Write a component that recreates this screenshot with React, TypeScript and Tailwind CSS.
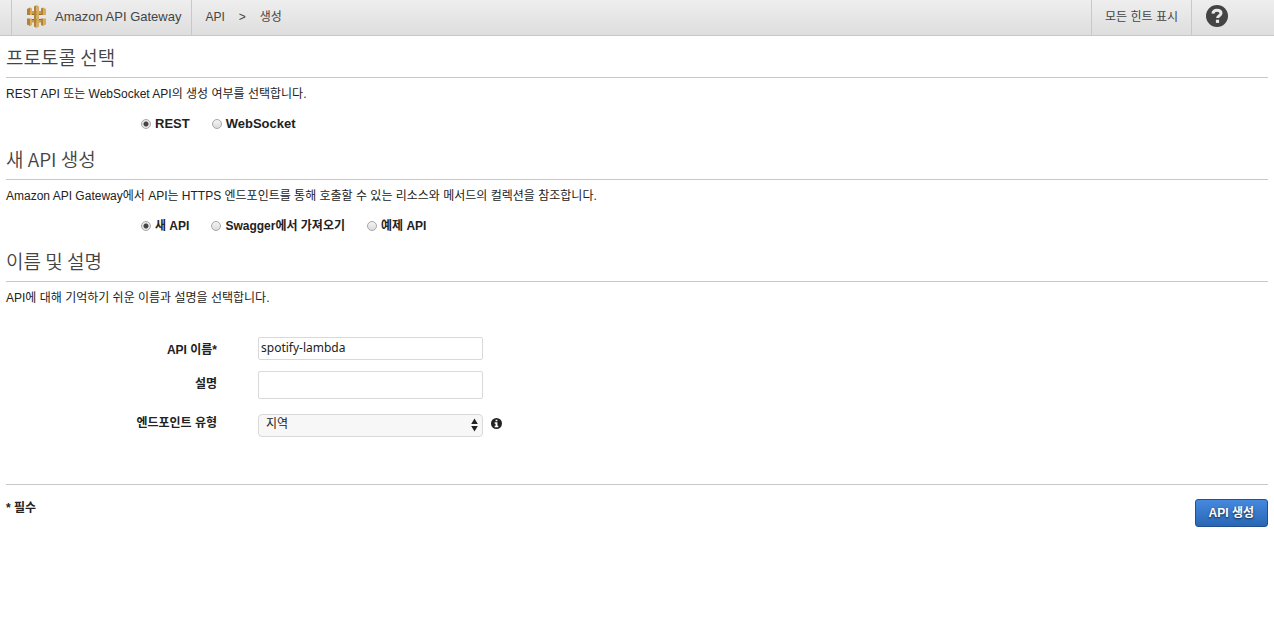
import { useState } from 'react';
import type { ReactNode } from 'react';

function GatewayLogo() {
  return (
    <svg width="21" height="23" viewBox="0 0 21 23" aria-hidden="true">
      <path d="M5 6h11v3.500H5zM5 14h11v3.500H5z" fill="#c99c4a" />
      <path d="M5 9h11v1H5zM5 14h11v1H5z" fill="#8a6526" />
      <path d="M1 4l3-1.500V10H1zM1 13.500h3V21l-3-1.500z" fill="#b08338" />
      <path d="M4 2.500L6 3.500V10H4zM4 13.500h2V20l-2 1z" fill="#d9ab5c" />
      <path d="M15 3.500l2-1V10h-2zM15 13.500h2V21l-2-1z" fill="#b08338" />
      <path d="M17 2.500L20 4v6h-3zM17 13.500h3v6L17 21z" fill="#d9ab5c" />
      <path d="M8 1.500L10.500 0v23L8 21.500z" fill="#b08338" />
      <path d="M10.500 0L13 1.500v20L10.500 23z" fill="#d9ab5c" />
    </svg>
  );
}

function HelpIcon() {
  return (
    <svg width="22" height="22" viewBox="0 0 22 22" aria-hidden="true">
      <circle cx="11" cy="11" r="11" fill="#444" />
      <path
        d="M6.900 8.600C7.200 6.200 8.800 5.300 11 5.300c2.400 0 4 1.100 4 3 0 2.700-3.400 2.300-3.400 4.800"
        fill="none"
        stroke="#e8e8e8"
        strokeWidth="3"
      />
      <path d="M9.900 14.700h3.200v3.200H9.900z" fill="#e8e8e8" />
    </svg>
  );
}

function InfoIcon() {
  return (
    <svg width="11" height="11" viewBox="0 0 12 12" aria-hidden="true">
      <circle cx="6" cy="6" r="6" fill="#222" />
      <path d="M5 2h2v1.500H5zM4 4.700h3v3.800h1V10H4V8.500h1V6.200H4z" fill="#fff" />
    </svg>
  );
}

function Section({ title, text, children }: { title: string; text: string; children: ReactNode }) {
  return (
    <section>
      <h2 className="h-[42px] border-b border-[#c8c8c8] pt-[7px] font-['Noto_Sans_CJK_KR',sans-serif] text-[19px] leading-7 font-[350] text-[#444]">
        {title}
      </h2>
      <p className="pt-1.5 text-xs leading-5">{text}</p>
      {children}
    </section>
  );
}

type RadioOption = { value: string; label: string };

function RadioRow({ name, options, className }: { name: string; options: RadioOption[]; className: string }) {
  const [selected, setSelected] = useState(options[0].value);

  return (
    <div className={`flex h-[34px] gap-[22px] pt-2.5 pl-[135px] ${className}`}>
      {options.map((option) => (
        <label key={option.value} className="flex h-5 items-center gap-1 leading-5 font-bold whitespace-nowrap">
          <input
            type="radio"
            name={name}
            value={option.value}
            checked={selected === option.value}
            onChange={() => setSelected(option.value)}
            className="h-2.5 w-2.5 appearance-none rounded-full border border-[#a6a6a6] bg-linear-to-b from-[#f4f4f4] to-[#dcdcdc] checked:bg-[radial-gradient(circle,#444_0_2px,#e8e8e8_3px)]"
          />
          {option.label}
        </label>
      ))}
    </div>
  );
}

const protocols = [
  { value: 'rest', label: 'REST' },
  { value: 'websocket', label: 'WebSocket' },
];

const sources = [
  { value: 'new', label: '새 API' },
  { value: 'swagger', label: 'Swagger에서 가져오기' },
  { value: 'example', label: '예제 API' },
];

export default function App() {
  const [name, setName] = useState('spotify-lambda');
  const [description, setDescription] = useState('');

  return (
    <div className="min-h-screen bg-white font-['Liberation_Sans','Noto_Sans_CJK_KR',sans-serif] text-[13px] text-[#222]">
      <header className="flex h-9 items-stretch border-b border-[#c8c8c8] bg-linear-to-b from-[#eee] to-[#dedede] pl-[11px] leading-8 text-[#444]">
        <a href="#" className="flex items-center gap-2 border-x border-[#c8c8c8] pr-2.5 pb-0.5 pl-3.5">
          <GatewayLogo />
          Amazon API Gateway
        </a>
        <nav className="flex items-center gap-3.5 pb-0.5 pl-[13px] text-xs">
          <a href="#">API</a>
          <span>&gt;</span>
          <span>생성</span>
        </nav>
        <button type="button" className="ml-auto border-x border-[#c8c8c8] px-[13px] pb-0.5 text-xs">
          모든 힌트 표시
        </button>
        <button type="button" aria-label="도움말" className="flex w-[82px] items-center pb-1 pl-3.5">
          <HelpIcon />
        </button>
      </header>

      <main className="px-1.5">
        <Section title="프로토콜 선택" text="REST API 또는 WebSocket API의 생성 여부를 선택합니다.">
          <RadioRow name="protocol" options={protocols} className="text-[13px]" />
        </Section>
        <Section
          title="새 API 생성"
          text="Amazon API Gateway에서 API는 HTTPS 엔드포인트를 통해 호출할 수 있는 리소스와 메서드의 컬렉션을 참조합니다."
        >
          <RadioRow name="source" options={sources} className="text-xs" />
        </Section>
        <Section title="이름 및 설명" text="API에 대해 기억하기 쉬운 이름과 설명을 선택합니다.">
          <form id="create-api" className="grid grid-cols-[211px_1fr] gap-x-[41px] pt-[29px] pb-[47px] text-xs">
            <label htmlFor="api-name" className="pt-[3px] text-right leading-5 font-bold">
              API 이름*
            </label>
            <input
              id="api-name"
              type="text"
              value={name}
              onChange={(e) => setName(e.target.value)}
              className="mb-[11px] h-[23px] w-[225px] rounded-xs border border-[#d9d9d9] px-0.5 pb-0.5 font-['Noto_Sans',sans-serif]"
            />
            <label htmlFor="description" className="pt-[3px] text-right leading-5 font-bold">
              설명
            </label>
            <textarea
              id="description"
              value={description}
              onChange={(e) => setDescription(e.target.value)}
              className="mb-[15px] h-7 w-[225px] resize-none rounded-xs border border-[#d9d9d9] px-0.5"
            />
            <label htmlFor="endpoint-type" className="text-right leading-[18px] font-bold">
              엔드포인트 유형
            </label>
            <div className="flex items-start gap-2">
              <div className="relative">
                <select
                  id="endpoint-type"
                  className="block h-[23px] w-[225px] appearance-none rounded border border-[#d9d9d9] bg-[#f7f7f7] pb-1 pl-[7px]"
                >
                  <option>지역</option>
                  <option>엣지 최적화</option>
                  <option>프라이빗</option>
                </select>
                <svg
                  className="pointer-events-none absolute top-1 right-[5px]"
                  width="7"
                  height="14"
                  viewBox="0 0 7 14"
                  aria-hidden="true"
                >
                  <path d="M3.500 .5L6.800 6H.2zM.2 8h6.600l-3.300 5.500z" fill="#222" />
                </svg>
              </div>
              <button type="button" aria-label="엔드포인트 유형 정보" className="pt-1">
                <InfoIcon />
              </button>
            </div>
          </form>
        </Section>

        <footer className="flex items-start justify-between border-t border-[#c8c8c8] pt-3.5">
          <p className="text-xs leading-[18px] font-bold">* 필수</p>
          <button
            type="submit"
            form="create-api"
            className="h-7 rounded-[3px] border border-[#20508e] bg-linear-to-b from-[#4589df] to-[#2a66b5] px-[13px] text-xs font-bold text-white text-shadow-[0_1px_2px_#123]"
          >
            API 생성
          </button>
        </footer>
      </main>
    </div>
  );
}
